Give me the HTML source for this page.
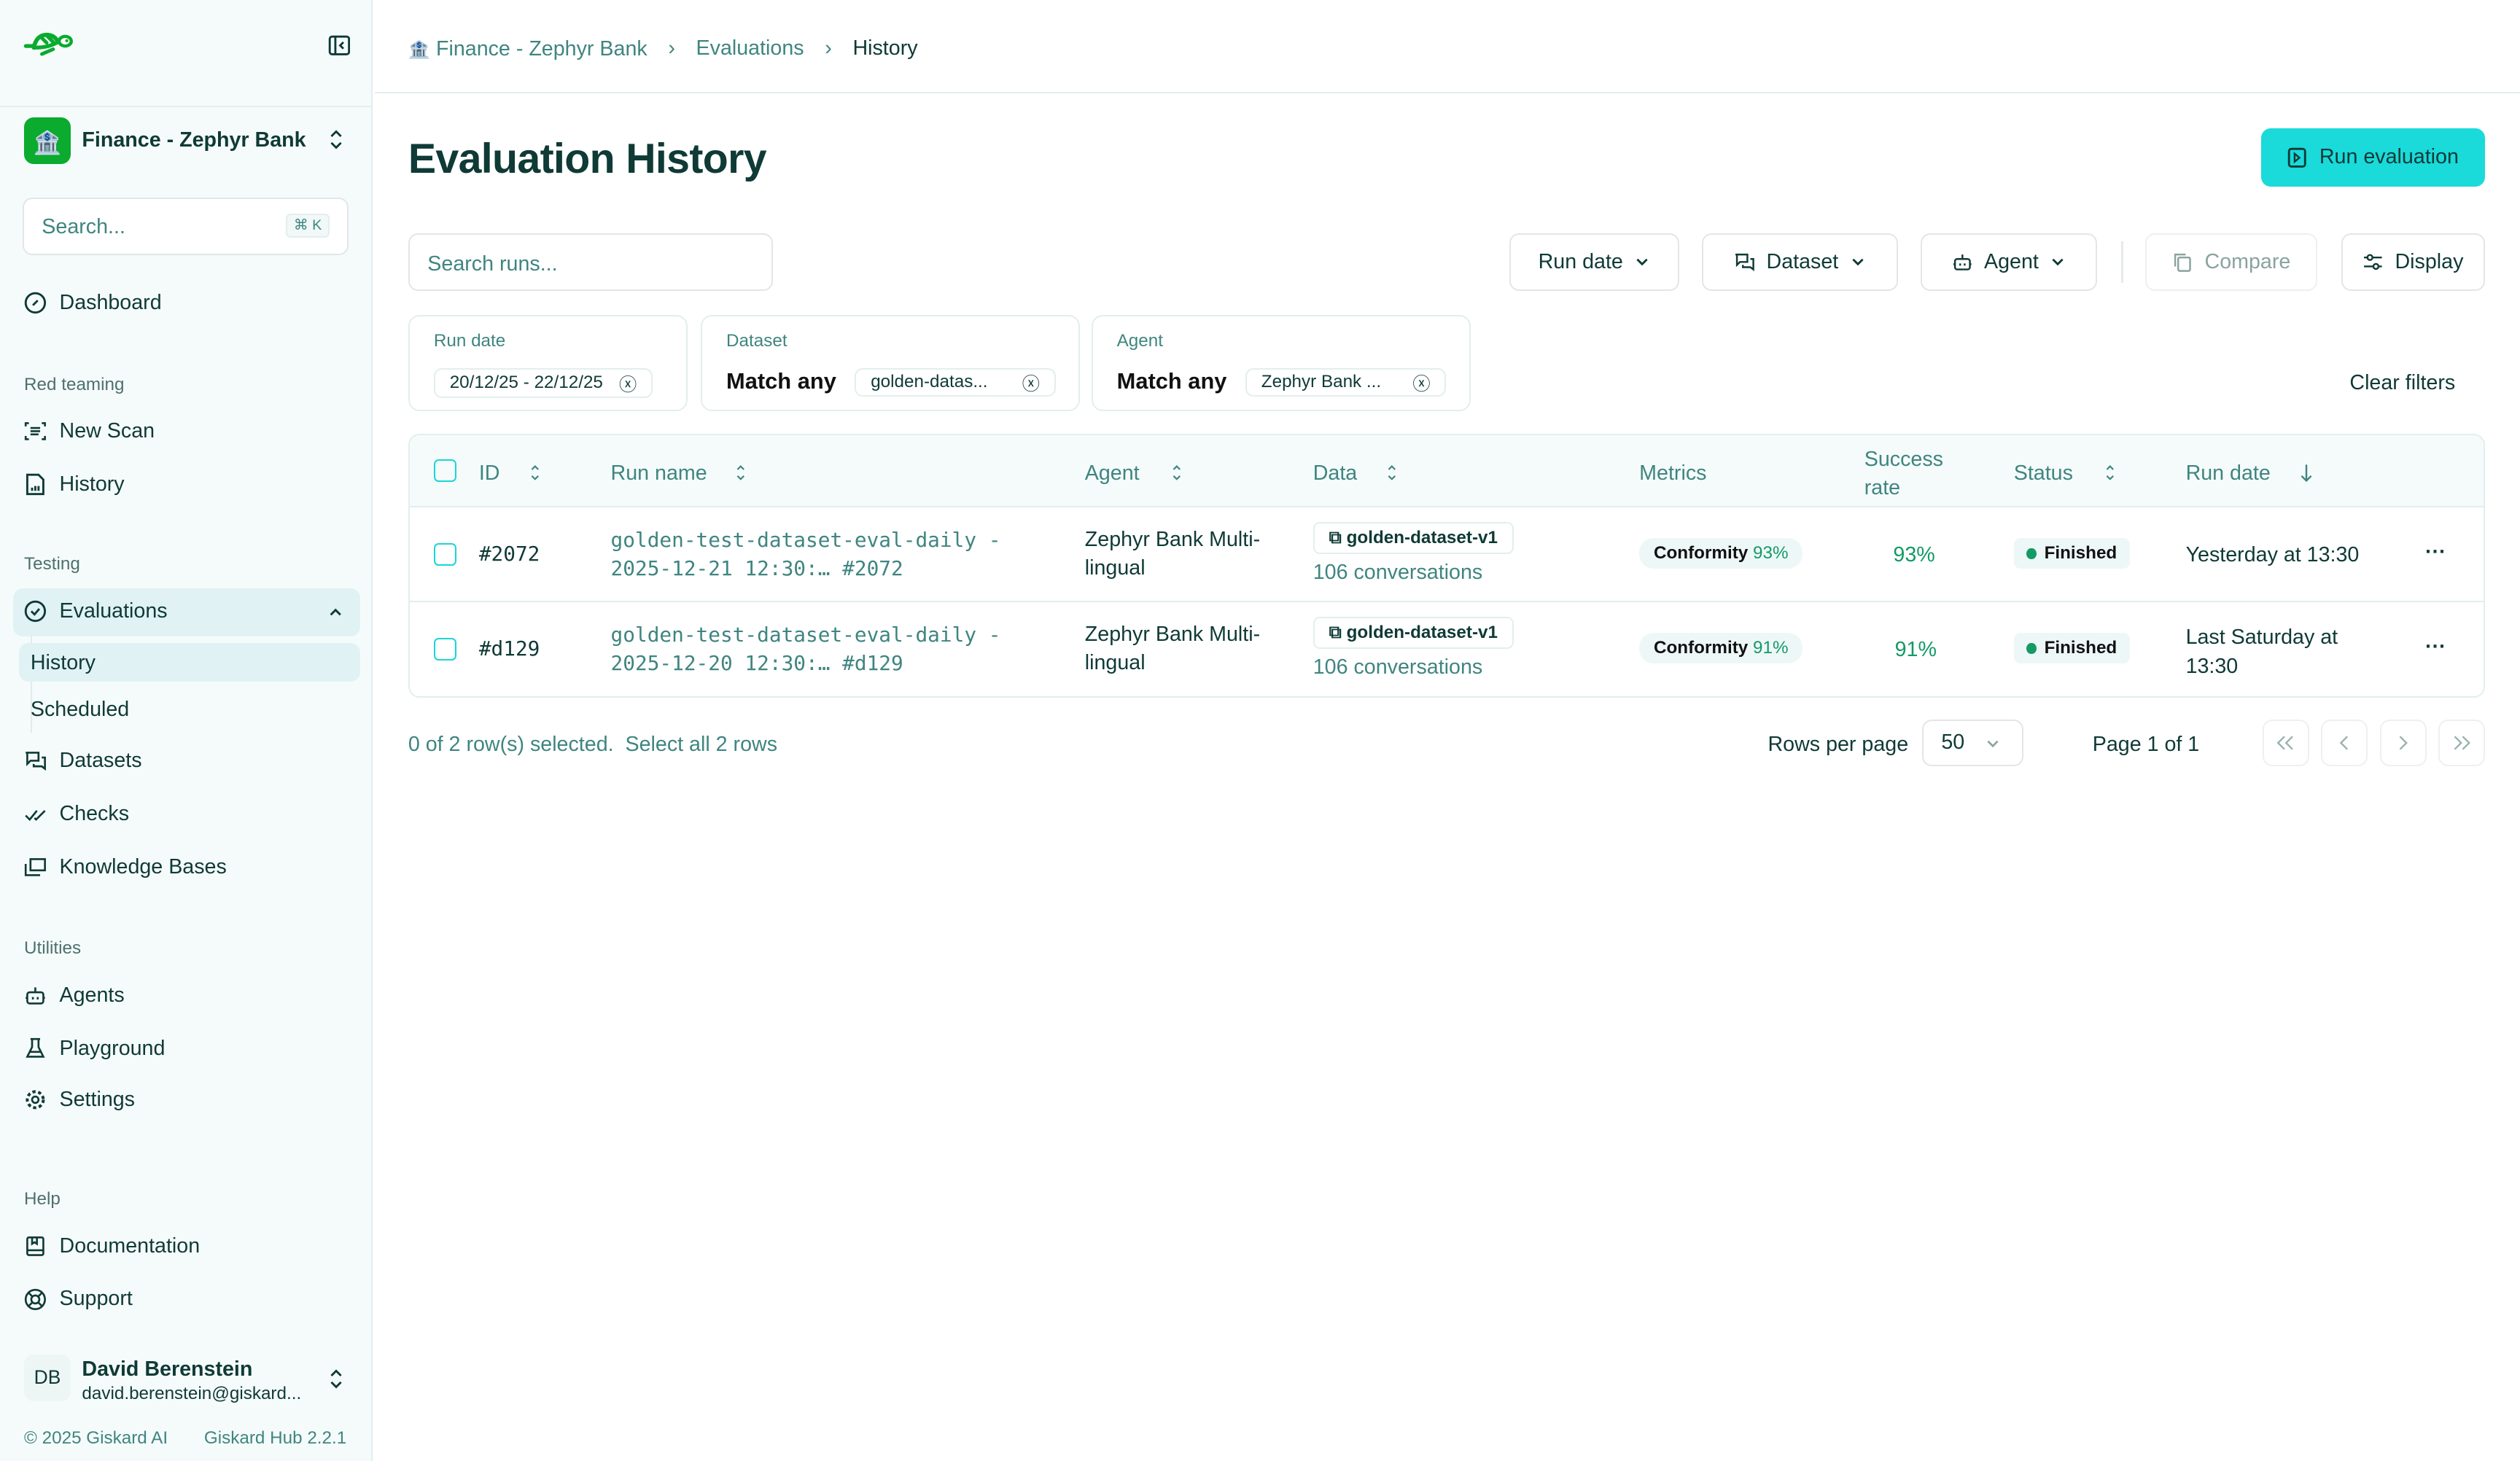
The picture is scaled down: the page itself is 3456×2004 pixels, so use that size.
<!DOCTYPE html>
<html><head><meta charset="utf-8">
<style>
html{zoom:2.2041}
*{box-sizing:border-box;margin:0;padding:0}
body{width:1568px;height:909px;overflow:hidden;background:#fff;font-family:"Liberation Sans",sans-serif;color:#0f3a36;position:relative;font-size:13px}
.a{position:absolute}
.sb{left:0;top:0;width:232px;height:909px;background:#f5fbfb;border-right:1px solid #e3eeee}
.nav{position:absolute;left:15px;display:flex;align-items:center;gap:8px;font-size:13px;color:#0f3a36}
.nav svg{width:14px;height:14px}
.sec{position:absolute;left:15px;font-size:11px;color:#4d716d}
.mut{color:#3f8580}
.btn{position:absolute;top:145px;height:36px;border:1px solid #e3e6e6;border-radius:6px;display:flex;align-items:center;justify-content:center;gap:7px;font-size:13px;background:#fff}
.btn svg{width:13px;height:13px}
.fc{position:absolute;top:196px;height:60px;border:1px solid #e3eeee;border-radius:7px;background:#fff}
.fc .l{position:absolute;left:15px;top:9px;font-size:11px;color:#3f8580}
.chip{position:absolute;top:32px;height:18px;border:1px solid #e3eeee;border-radius:5px;font-size:11px;display:flex;align-items:center;padding:0 9px;gap:10px}
.mono{font-family:"DejaVu Sans Mono","Liberation Mono",monospace;font-size:12.6px}
.cb{position:absolute;width:14px;height:14px;border:1.3px solid #1ad6d6;border-radius:3px;left:270px}
.th{position:absolute;font-size:13px;color:#3f8580}
.pill{position:absolute;height:19px;background:#eef7f7;border-radius:9px;font-size:11px;font-weight:bold;display:flex;align-items:center;padding:0 9px;color:#111}
.pb{position:absolute;top:448px;width:29px;height:29px;border:1px solid #eef0f0;border-radius:6px;display:flex;align-items:center;justify-content:center}
</style></head><body>
<svg width="0" height="0" style="position:absolute"><defs>
<symbol id="ud" viewBox="0 0 10 14"><path d="M2 5l3-3 3 3M2 9l3 3 3-3" fill="none" stroke="#0f3a36" stroke-width="1.3"/></symbol>
<symbol id="sd" viewBox="0 0 8 14"><path d="M2 5l2-2 2 2M2 9l2 2 2-2" fill="none" stroke="#3f8580" stroke-width="1"/></symbol>
<symbol id="dn" viewBox="0 0 10 10"><path d="M2 3.5l3 3 3-3" fill="none" stroke="#0f3a36" stroke-width="1.3"/></symbol>
</defs></svg>
<div class="a sb"></div>
<div class="a" style="left:0;top:66px;width:232px;border-top:1px solid #e6eeee"></div>
<svg class="a" style="left:14px;top:18px" width="32" height="18" viewBox="0 0 32 18"><path d="M2 10.5h5" stroke="#0aab2e" stroke-width="2.4" stroke-linecap="round"/><path d="M7 11.5C8 6 11 3.5 15 3.5c3.5 0 6 2 7 4.5" fill="none" stroke="#0aab2e" stroke-width="2.6" stroke-linecap="round"/><path d="M7 11.5c5 0 10-0.5 15-3.5" fill="none" stroke="#0aab2e" stroke-width="2.4"/><ellipse cx="26.5" cy="7.5" rx="3.8" ry="3" fill="none" stroke="#0aab2e" stroke-width="2"/><circle cx="27.5" cy="7.2" r="0.9" fill="#0aab2e"/><path d="M11 4.5l4 4M15 4l4 4" stroke="#0aab2e" stroke-width="2.2" stroke-linecap="round"/><path d="M12 15.5l7-3" stroke="#0aab2e" stroke-width="2.2" stroke-linecap="round"/></svg>
<svg class="a" style="left:204px;top:22px" width="14" height="13" viewBox="0 0 14 13"><rect x="1" y="1" width="12" height="11" rx="1.5" fill="none" stroke="#0f3a36" stroke-width="1.3"/><path d="M4.5 1v11M9.5 4.5l-2 2 2 2" fill="none" stroke="#0f3a36" stroke-width="1.3"/></svg>
<div class="a" style="left:15px;top:73px;width:29px;height:29px;border-radius:6px;background:#0aab2e;display:flex;align-items:center;justify-content:center;font-size:14px;font-family:'Noto Sans CJK SC',sans-serif">🏦</div>
<div class="a" style="left:51px;top:80px;font-size:13px;font-weight:bold">Finance - Zephyr Bank</div>
<svg class="a" style="left:204px;top:80px" width="10" height="14"><use href="#ud"/></svg>
<div class="a" style="left:14px;top:123px;width:203px;height:36px;border:1px solid #e2e6e6;border-radius:6px;background:#fff"></div>
<div class="a mut" style="left:26px;top:134px;font-size:13px">Search...</div>
<div class="a" style="left:178px;top:133px;width:27px;height:15px;border:1px solid #e3eeee;border-radius:3px;background:#f1f8f8;font-size:9px;color:#3f8580;text-align:center;line-height:13px">⌘ K</div>
<div class="nav" style="top:181px"><svg viewBox="0 0 14 14"><circle cx="7" cy="7" r="6" fill="none" stroke="#0f3a36" stroke-width="1.3"/><path d="M5.5 8.5l3-3" stroke="#0f3a36" stroke-width="1.3"/></svg>Dashboard</div>
<div class="sec" style="top:233px">Red teaming</div>
<div class="nav" style="top:261px"><svg viewBox="0 0 14 14"><path d="M1 4V2h2M11 2h2v2M13 10v2h-2M3 12H1v-2M4 5h6M4 7h6M4 9h5" fill="none" stroke="#0f3a36" stroke-width="1.2"/></svg>New Scan</div>
<div class="nav" style="top:294px"><svg viewBox="0 0 14 14"><path d="M2 1h7l3 3v9H2z M5 11v-2M7 11V8M9 11v-3" fill="none" stroke="#0f3a36" stroke-width="1.3"/></svg>History</div>
<div class="sec" style="top:345px">Testing</div>
<div class="a" style="left:8px;top:366px;width:216px;height:30px;border-radius:6px;background:#e1f2f4"></div>
<div class="nav" style="top:373px"><svg viewBox="0 0 14 14"><circle cx="7" cy="7" r="6" fill="none" stroke="#0f3a36" stroke-width="1.3"/><path d="M4.5 7l2 2 3-3.5" fill="none" stroke="#0f3a36" stroke-width="1.3"/></svg>Evaluations</div>
<svg class="a" style="left:203px;top:376px" width="12" height="10" viewBox="0 0 10 10"><path d="M2 6.5l3-3 3 3" fill="none" stroke="#0f3a36" stroke-width="1.3"/></svg>
<div class="a" style="left:19px;top:396px;width:1px;height:60px;background:#e3eaea"></div>
<div class="a" style="left:12px;top:400px;width:212px;height:24px;border-radius:6px;background:#e1f2f4"></div>
<div class="a" style="left:19px;top:405px;font-size:13px">History</div>
<div class="a" style="left:19px;top:434px;font-size:13px">Scheduled</div>
<div class="nav" style="top:466px"><svg viewBox="0 0 14 14"><path d="M1 2h8v5H4l-2 2V2zM11 5h2v7l-2-1.5H6V9" fill="none" stroke="#0f3a36" stroke-width="1.2"/></svg>Datasets</div>
<div class="nav" style="top:499px"><svg viewBox="0 0 14 14"><path d="M1 8l2.5 2.5L8 5M6.5 9.5l1 1L13 5" fill="none" stroke="#0f3a36" stroke-width="1.2"/></svg>Checks</div>
<div class="nav" style="top:532px"><svg viewBox="0 0 14 14"><path d="M4 2h9v7H4zM1 5v7h9" fill="none" stroke="#0f3a36" stroke-width="1.2"/></svg>Knowledge Bases</div>
<div class="sec" style="top:584px">Utilities</div>
<div class="nav" style="top:612px"><svg viewBox="0 0 14 14"><rect x="2" y="5" width="10" height="7" rx="1.5" fill="none" stroke="#0f3a36" stroke-width="1.2"/><path d="M7 5V2M1 8.5h1M12 8.5h1M5.5 8v1.5M8.5 8v1.5" stroke="#0f3a36" stroke-width="1.2"/></svg>Agents</div>
<div class="nav" style="top:645px"><svg viewBox="0 0 14 14"><path d="M5 1v5L2 12h10L9 6V1M4 1h6M3.5 9h7" fill="none" stroke="#0f3a36" stroke-width="1.2"/></svg>Playground</div>
<div class="nav" style="top:677px"><svg viewBox="0 0 14 14"><circle cx="7" cy="7" r="2" fill="none" stroke="#0f3a36" stroke-width="1.2"/><circle cx="7" cy="7" r="5" fill="none" stroke="#0f3a36" stroke-width="1.8" stroke-dasharray="2 1.6"/></svg>Settings</div>
<div class="sec" style="top:740px">Help</div>
<div class="nav" style="top:768px"><svg viewBox="0 0 14 14"><rect x="2" y="1.5" width="10" height="11" rx="1" fill="none" stroke="#0f3a36" stroke-width="1.2"/><path d="M2 9.5h10M5 1.5v4l1.5-1 1.5 1v-4" fill="none" stroke="#0f3a36" stroke-width="1.2"/></svg>Documentation</div>
<div class="nav" style="top:801px"><svg viewBox="0 0 14 14"><circle cx="7" cy="7" r="6" fill="none" stroke="#0f3a36" stroke-width="1.2"/><circle cx="7" cy="7" r="2.5" fill="none" stroke="#0f3a36" stroke-width="1.2"/><path d="M3 3l2.3 2.3M11 3L8.7 5.3M3 11l2.3-2.3M11 11L8.7 8.7" stroke="#0f3a36" stroke-width="1.2"/></svg>Support</div>
<div class="a" style="left:15px;top:843px;width:29px;height:29px;border-radius:6px;background:#edf5f5;font-size:12px;text-align:center;line-height:29px">DB</div>
<div class="a" style="left:51px;top:845px;font-size:13px;font-weight:bold">David Berenstein</div>
<div class="a" style="left:51px;top:861px;font-size:11px">david.berenstein@giskard...</div>
<svg class="a" style="left:204px;top:851px" width="10" height="14"><use href="#ud"/></svg>
<div class="a mut" style="left:15px;top:889px;font-size:11px">© 2025 Giskard AI</div>
<div class="a mut" style="left:127px;top:889px;font-size:11px">Giskard Hub 2.2.1</div>

<div class="a" style="left:233px;top:57px;width:1335px;border-top:1px solid #e6eeee"></div>
<div class="a" style="left:254px;top:22px;font-size:13px;display:flex;gap:13px;align-items:center"><span class="mut"><span style="font-family:'Noto Sans CJK SC',sans-serif;font-size:11px">🏦</span> Finance - Zephyr Bank</span><span class="mut">›</span><span class="mut">Evaluations</span><span class="mut">›</span><span>History</span></div>
<div class="a" style="left:254px;top:84px;font-size:26px;font-weight:bold;letter-spacing:-0.3px">Evaluation History</div>
<div class="a" style="left:1407px;top:80px;width:139px;height:36px;border-radius:6px;background:#1adada;display:flex;align-items:center;justify-content:center;gap:8px;font-size:13px"><svg width="12" height="13" viewBox="0 0 12 13"><rect x="1" y="1" width="10" height="11" rx="1.5" fill="none" stroke="#0f3a36" stroke-width="1.3"/><path d="M4.5 4l3 2.5-3 2.5z" fill="none" stroke="#0f3a36" stroke-width="1.1"/></svg>Run evaluation</div>
<div class="a" style="left:254px;top:145px;width:227px;height:36px;border:1px solid #e2e6e6;border-radius:6px"></div>
<div class="a mut" style="left:266px;top:157px;font-size:13px">Search runs...</div>
<div class="btn" style="left:939px;width:106px">Run date <svg width="10" height="10" style="width:10px;height:10px"><use href="#dn"/></svg></div>
<div class="btn" style="left:1059px;width:122px"><svg viewBox="0 0 14 14"><path d="M1 2h8v5H4l-2 2V2zM11 5h2v7l-2-1.5H6V9" fill="none" stroke="#0f3a36" stroke-width="1.2"/></svg>Dataset <svg style="width:10px;height:10px"><use href="#dn"/></svg></div>
<div class="btn" style="left:1195px;width:110px"><svg viewBox="0 0 14 14"><rect x="2" y="5" width="10" height="7" rx="1.5" fill="none" stroke="#0f3a36" stroke-width="1.2"/><path d="M7 5V2M1 8.5h1M12 8.5h1M5.5 8v1.5M8.5 8v1.5" stroke="#0f3a36" stroke-width="1.2"/></svg>Agent <svg style="width:10px;height:10px"><use href="#dn"/></svg></div>
<div class="a" style="left:1320px;top:150px;width:1px;height:26px;background:#e6eaea"></div>
<div class="btn" style="left:1335px;width:107px;color:#8aa3a0;border-color:#eef0f0"><svg viewBox="0 0 14 14"><rect x="4" y="4" width="8" height="9" rx="1" fill="none" stroke="#8aa3a0" stroke-width="1.2"/><path d="M2 10V2h7" fill="none" stroke="#8aa3a0" stroke-width="1.2"/></svg>Compare</div>
<div class="btn" style="left:1457px;width:89px"><svg viewBox="0 0 14 14"><path d="M1 4h12M1 10h12" stroke="#0f3a36" stroke-width="1.2"/><circle cx="5" cy="4" r="1.7" fill="#fff" stroke="#0f3a36" stroke-width="1.2"/><circle cx="9" cy="10" r="1.7" fill="#fff" stroke="#0f3a36" stroke-width="1.2"/></svg>Display</div>

<div class="fc" style="left:254px;width:174px"><div class="l">Run date</div><div class="chip" style="left:15px;height:19px;top:32px">20/12/25 - 22/12/25 <span>ⓧ</span></div></div>
<div class="fc" style="left:436px;width:236px"><div class="l">Dataset</div><div class="a" style="left:15px;top:32px;font-size:14px;font-weight:bold;color:#111">Match any</div><div class="chip" style="left:95px;width:125px;justify-content:space-between">golden-datas... <span>ⓧ</span></div></div>
<div class="fc" style="left:679px;width:236px"><div class="l">Agent</div><div class="a" style="left:15px;top:32px;font-size:14px;font-weight:bold;color:#111">Match any</div><div class="chip" style="left:95px;width:125px;justify-content:space-between">Zephyr Bank ... <span>ⓧ</span></div></div>
<div class="a" style="left:1462px;top:231px;font-size:13px">Clear filters</div>

<div class="a" style="left:254px;top:270px;width:1292px;height:164px;border:1px solid #e3eeee;border-radius:7px;overflow:hidden"><div style="height:45px;background:#f5fbfb;border-bottom:1px solid #e3eeee"></div><div style="height:59px;border-bottom:1px solid #e3eeee"></div></div>
<div class="cb" style="top:286px"></div>
<div class="th" style="left:298px;top:287px">ID</div><svg class="a" style="left:329px;top:287px" width="8" height="14"><use href="#sd"/></svg>
<div class="th" style="left:380px;top:287px">Run name</div><svg class="a" style="left:457px;top:287px" width="8" height="14"><use href="#sd"/></svg>
<div class="th" style="left:675px;top:287px">Agent</div><svg class="a" style="left:728px;top:287px" width="8" height="14"><use href="#sd"/></svg>
<div class="th" style="left:817px;top:287px">Data</div><svg class="a" style="left:862px;top:287px" width="8" height="14"><use href="#sd"/></svg>
<div class="th" style="left:1020px;top:287px">Metrics</div>
<div class="th" style="left:1160px;top:277px;line-height:18px">Success<br>rate</div>
<div class="th" style="left:1253px;top:287px">Status</div><svg class="a" style="left:1309px;top:287px" width="8" height="14"><use href="#sd"/></svg>
<div class="th" style="left:1360px;top:287px">Run date</div><svg class="a" style="left:1430px;top:287px" width="10" height="14" viewBox="0 0 10 14"><path d="M5 2v10M2 9l3 3 3-3" fill="none" stroke="#3f8580" stroke-width="1.1"/></svg>

<div class="cb" style="top:338px"></div>
<div class="a mono" style="left:298px;top:337px">#2072</div>
<div class="a mono mut" style="left:380px;top:327px;line-height:18px">golden-test-dataset-eval-daily -<br>2025-12-21 12:30:… #2072</div>
<div class="a" style="left:675px;top:327px;line-height:18px">Zephyr Bank Multi-<br>lingual</div>
<div class="a" style="left:817px;top:325px;height:20px;border:1px solid #e3eeee;border-radius:4px;padding:0 9px;font-size:11px;font-weight:bold;line-height:18px">⧉ golden-dataset-v1</div>
<div class="a mut" style="left:817px;top:349px">106 conversations</div>
<div class="pill" style="left:1020px;top:335px">Conformity&nbsp;<span style="color:#139a66;font-weight:normal">93%</span></div>
<div class="a" style="left:1178px;top:338px;color:#139a66">93%</div>
<div class="pill" style="left:1253px;top:335px;border-radius:4px;padding:0 8px"><span style="display:inline-block;width:6px;height:7px;border-radius:50%;background:#139a66;margin-right:5px"></span>Finished</div>
<div class="a" style="left:1360px;top:338px">Yesterday at 13:30</div>
<div class="a" style="left:1509px;top:336px;font-weight:bold">···</div>

<div class="cb" style="top:397px"></div>
<div class="a mono" style="left:298px;top:396px">#d129</div>
<div class="a mono mut" style="left:380px;top:386px;line-height:18px">golden-test-dataset-eval-daily -<br>2025-12-20 12:30:… #d129</div>
<div class="a" style="left:675px;top:386px;line-height:18px">Zephyr Bank Multi-<br>lingual</div>
<div class="a" style="left:817px;top:384px;height:20px;border:1px solid #e3eeee;border-radius:4px;padding:0 9px;font-size:11px;font-weight:bold;line-height:18px">⧉ golden-dataset-v1</div>
<div class="a mut" style="left:817px;top:408px">106 conversations</div>
<div class="pill" style="left:1020px;top:394px">Conformity&nbsp;<span style="color:#139a66;font-weight:normal">91%</span></div>
<div class="a" style="left:1179px;top:397px;color:#139a66">91%</div>
<div class="pill" style="left:1253px;top:394px;border-radius:4px;padding:0 8px"><span style="display:inline-block;width:6px;height:7px;border-radius:50%;background:#139a66;margin-right:5px"></span>Finished</div>
<div class="a" style="left:1360px;top:388px;line-height:18px">Last Saturday at<br>13:30</div>
<div class="a" style="left:1509px;top:395px;font-weight:bold">···</div>

<div class="a mut" style="left:254px;top:456px">0 of 2 row(s) selected.&nbsp; Select all 2 rows</div>
<div class="a" style="left:1100px;top:456px">Rows per page</div>
<div class="a" style="left:1196px;top:448px;width:63px;height:29px;border:1px solid #e2e6e6;border-radius:6px;padding-left:11px;line-height:27px">50</div>
<svg class="a" style="left:1235px;top:458px" width="10" height="10" viewBox="0 0 10 10"><path d="M2 3.5l3 3 3-3" fill="none" stroke="#8aa3a0" stroke-width="1.2"/></svg>
<div class="a" style="left:1302px;top:456px">Page 1 of 1</div>
<div class="pb" style="left:1408px"><svg width="12" height="10" viewBox="0 0 12 10"><path d="M5 1L1 5l4 4M10 1L6 5l4 4" fill="none" stroke="#9ab3b0" stroke-width="1.1"/></svg></div>
<div class="pb" style="left:1444px"><svg width="8" height="10" viewBox="0 0 8 10"><path d="M6 1L2 5l4 4" fill="none" stroke="#9ab3b0" stroke-width="1.1"/></svg></div>
<div class="pb" style="left:1481px"><svg width="8" height="10" viewBox="0 0 8 10"><path d="M2 1l4 4-4 4" fill="none" stroke="#9ab3b0" stroke-width="1.1"/></svg></div>
<div class="pb" style="left:1517px"><svg width="12" height="10" viewBox="0 0 12 10"><path d="M2 1l4 4-4 4M7 1l4 4-4 4" fill="none" stroke="#9ab3b0" stroke-width="1.1"/></svg></div>
</body></html>
